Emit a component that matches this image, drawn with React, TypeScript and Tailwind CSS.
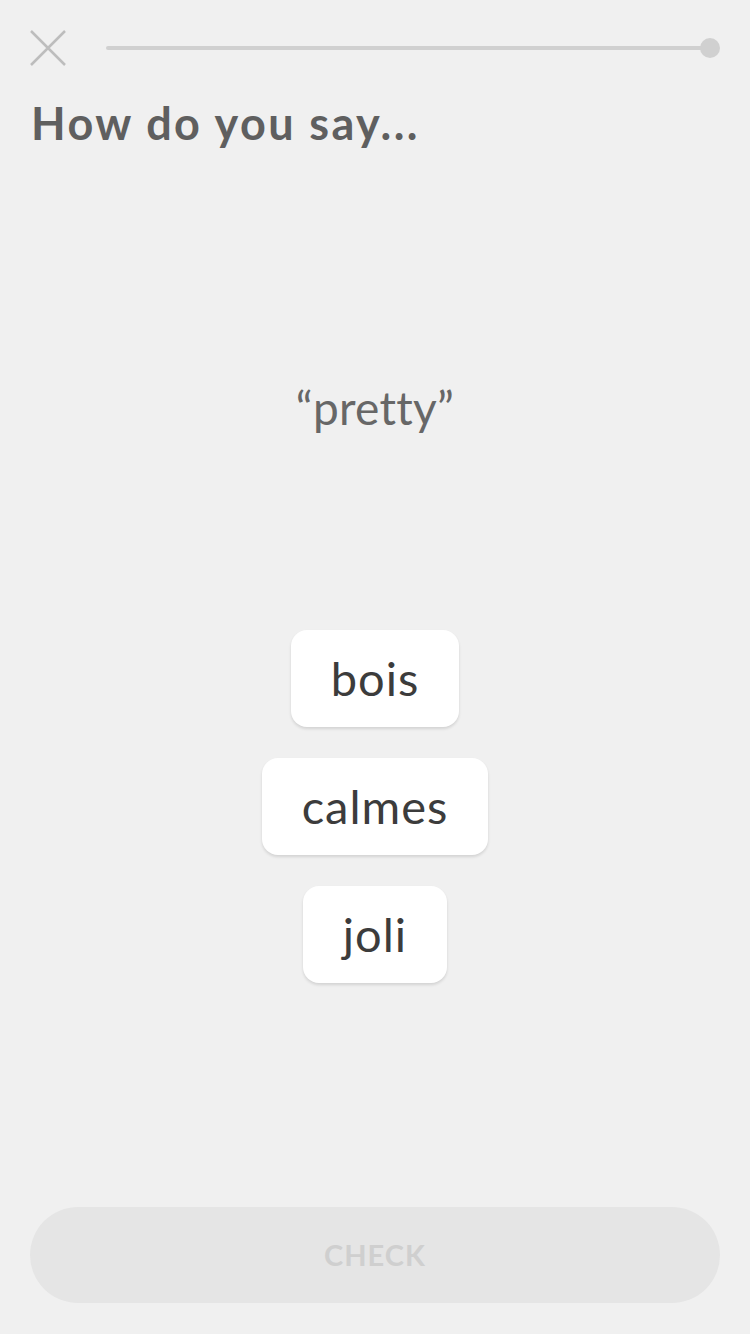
import React from 'react';

const choices = ['bois', 'calmes', 'joli'];

const CloseIcon = () => (
  <svg width="36" height="36" viewBox="0 0 36 36" fill="none">
    <path d="M1 1L35 35M35 1L1 35" stroke="#bdbdbd" strokeWidth="2.5" strokeLinecap="butt" />
  </svg>
);

const App = () => {
  return (
    <div className="w-[750px] h-[1334px] bg-[#f0f0f0] flex flex-col font-['Lato',sans-serif]">
      <div className="flex items-center h-[36px] mt-[30px] pl-[30px] pr-[30px]">
        <CloseIcon />
        <div className="flex-1 flex items-center ml-[40px]">
          <div className="flex-1 h-[4px] bg-[#d0d0d0] rounded-full" />
          <div className="w-[20px] h-[20px] rounded-full bg-[#d0d0d0] -ml-[12px]" />
        </div>
      </div>

      <h1 className="mt-[29px] px-[31px] text-[45px] leading-[56px] font-bold text-[#5f5f5f] tracking-[2.4px]">
        How do you say...
      </h1>

      <div className="mt-[229px] text-center text-[46px] leading-[56px] text-[#676767] tracking-[0.3px]">
        “pretty”
      </div>

      <div className="mt-[194px] flex flex-col items-center gap-[31px]">
        {choices.map((c) => (
          <button
            key={c}
            className="h-[97px] px-[40px] bg-white rounded-[16px] shadow-[0_2px_3px_rgba(0,0,0,0.12)] text-[47px] tracking-[1px] text-[#3c3c3c]"
          >
            {c}
          </button>
        ))}
      </div>

      <div className="flex-1" />

      <div className="px-[30px] pb-[31px]">
        <div className="h-[96px] rounded-full bg-[#e5e5e5] flex items-center justify-center">
          <span className="text-[29px] font-bold tracking-[1px] text-[#cfcfcf]">CHECK</span>
        </div>
      </div>
    </div>
  );
};

export default App;
